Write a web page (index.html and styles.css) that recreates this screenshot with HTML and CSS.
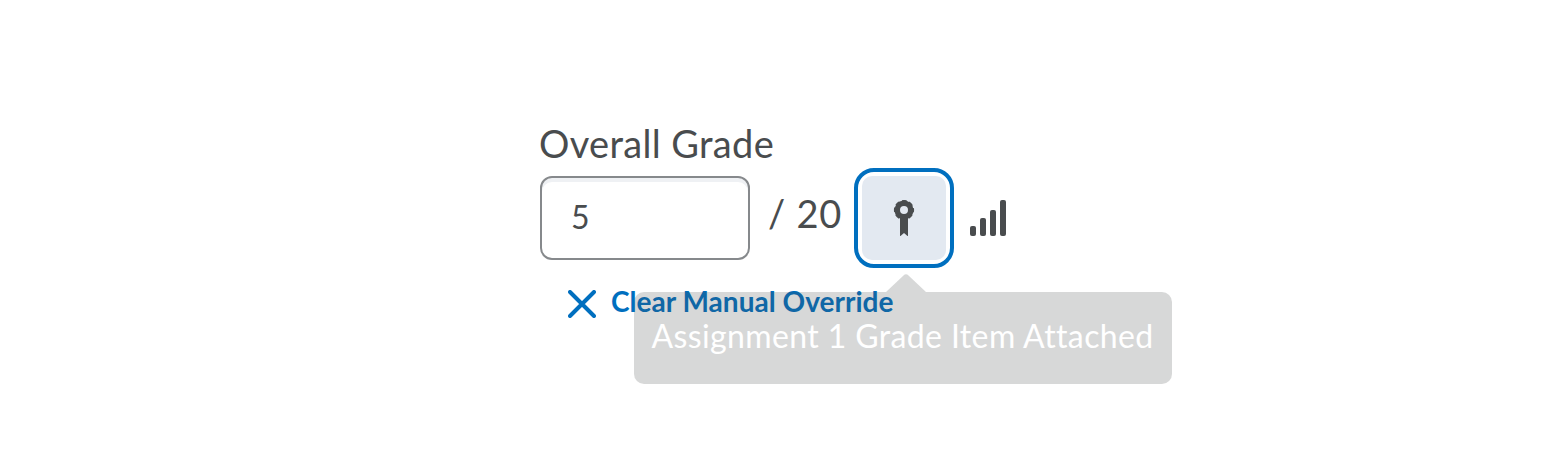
FILE: index.html
```html
<!DOCTYPE html>
<html lang="en">
<head>
<meta charset="utf-8">
<title>Overall Grade</title>
<link rel="stylesheet" href="styles.css">
</head>
<body>
<main class="grade">
  <label class="grade-label" for="score">Overall Grade</label>
  <div class="grade-row">
    <input class="score" id="score" type="text" value="5">
    <span class="total">/ 20</span>
    <div class="item">
      <button class="item-button" aria-label="Grade item">
        <svg class="ribbon" viewBox="0 0 24 40" aria-hidden="true">
          <circle cx="12" cy="12" r="6.750"/>
          <circle class="scallops" cx="12" cy="12" r="8.600"/>
          <path d="M8 18h8v19.500q0 1-.8.300L12 35l-3.200 2.800q-.8.700-.8-.3z"/>
        </svg>
      </button>
      <span class="tooltip" role="tooltip">Assignment 1 Grade Item Attached<svg class="pointer" viewBox="0 0 40 18" aria-hidden="true"><path d="M0 18L17.500 1.500Q20-1 22.500 1.500L40 18z"/></svg></span>
    </div>
    <svg class="stats" viewBox="0 0 36 36" aria-hidden="true">
      <rect x="0" y="26" width="6" height="10" rx="2"/><rect x="10" y="18" width="6" height="18" rx="2"/><rect x="20" y="10" width="6" height="26" rx="2"/><rect x="30" y="0" width="6" height="36" rx="2"/>
    </svg>
  </div>
  <button class="clear">
    <svg class="cross" viewBox="0 0 28 28" aria-hidden="true"><path d="M2 2L26 26M26 2L2 26"/></svg>
    <span class="clear-text">Clear Manual Override</span>
  </button>
</main>
</body>
</html>
```
FILE: styles.css
```css
* { box-sizing: border-box; }
body { margin: 0; background: #fff; color: #494c4e; font-family: Lato, sans-serif; }
button { border: 0; padding: 0; font: inherit; color: inherit; background: none; }
.grade { min-height: 466px; padding: 121px 0 0 540px; }
.grade-label { display: block; height: 47px; margin-left: -1px; line-height: 44px; font-size: 38px; letter-spacing: .33px; }
.grade-row { display: flex; align-items: center; height: 100px; }
.score { width: 210px; height: 84px; padding: 0 29px 4px; border: 2px solid #86898c; border-radius: 12px; box-shadow: inset 0 4px 0 #eff1f4; font: 32px Lato, sans-serif; color: #494c4e; outline: 0; }
.total { width: 86px; margin-left: 18px; padding-bottom: 10px; font-size: 38px; letter-spacing: .8px; white-space: nowrap; }
.item { position: relative; }
.item-button { position: relative; display: flex; align-items: center; justify-content: center; width: 100px; height: 100px; border: 4px solid #006fbf; border-radius: 20px; background: #fff; }
.item-button::before { content: ""; position: absolute; inset: 4px; border-radius: 10px; background: #e3e9f1; }
.ribbon { position: relative; width: 24px; height: 40px; fill: #494c4e; }
.ribbon circle { fill: none; stroke: #494c4e; stroke-width: 5.5; }
.ribbon .scallops { stroke-width: 3; stroke-dasharray: 4.4 2.355; stroke-dashoffset: 2.2; }
.tooltip { position: absolute; z-index: 1; top: 124px; left: -220px; width: 538px; height: 92px; padding-left: 17.5px; border-radius: 10px; background: rgba(73, 76, 78, .22); color: #fff; font-size: 32px; line-height: 88px; white-space: nowrap; letter-spacing: .38px; }
.pointer { position: absolute; left: 252px; top: -18px; width: 40px; height: 18px; fill: rgba(73, 76, 78, .22); }
.stats { width: 36px; height: 36px; margin-left: 16px; fill: #494c4e; }
.clear { display: flex; align-items: center; gap: 15px; height: 40px; margin: 16px 0 0 28px; color: #006fbf; font-size: 28px; font-weight: 700; letter-spacing: .03px; }
.clear-text { padding-bottom: 6px; }
.cross { width: 28px; height: 28px; fill: none; stroke: #006fbf; stroke-width: 4; stroke-linecap: round; }
```
